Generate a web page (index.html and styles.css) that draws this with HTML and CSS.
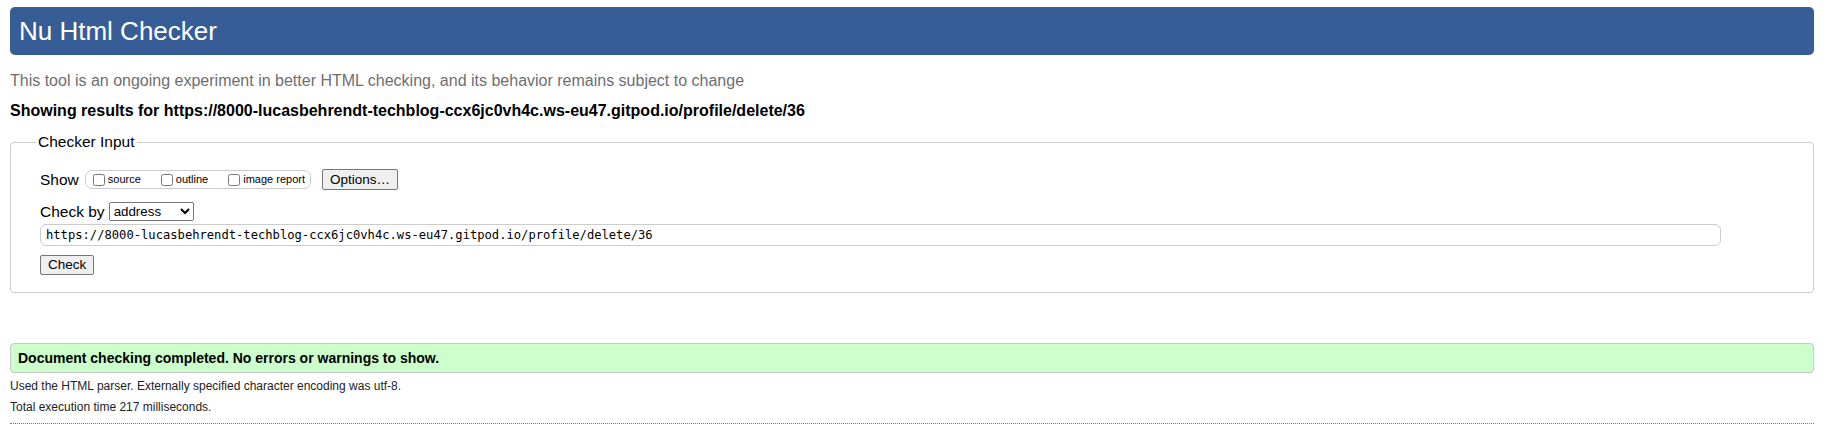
FILE: index.html
```html
<!DOCTYPE html>
<html lang="en">
<head>
<meta charset="utf-8">
<title>Showing results for https://8000-lucasbehrendt-techblog-ccx6jc0vh4c.ws-eu47.gitpod.io/profile/delete/36 - Nu Html Checker</title>
<link rel="stylesheet" href="styles.css">
</head>
<body>
<h1 class="title">Nu Html Checker</h1>
<p class="tagline">This tool is an ongoing experiment in better HTML checking, and its behavior remains subject to change</p>
<p class="results-for">Showing results for https://8000-lucasbehrendt-techblog-ccx6jc0vh4c.ws-eu47.gitpod.io/profile/delete/36</p>
<form class="checker-form">
  <fieldset class="checker">
    <legend class="checker-legend">Checker Input</legend>
    <div class="row">
      <span class="row-label">Show</span>
      <span class="show-group">
        <label class="opt"><input type="checkbox" class="cb">source</label>
        <label class="opt"><input type="checkbox" class="cb">outline</label>
        <label class="opt"><input type="checkbox" class="cb">image report</label>
      </span>
      <button type="button" class="btn btn-options">Options…</button>
    </div>
    <div class="row row-check-by">
      <span class="row-label">Check by</span>
      <select class="doc-select">
        <option selected>address</option>
        <option>file upload</option>
        <option>text input</option>
      </select>
    </div>
    <input class="url" type="url" value="https://8000-lucasbehrendt-techblog-ccx6jc0vh4c.ws-eu47.gitpod.io/profile/delete/36">
    <div class="submit-row"><button type="button" class="btn">Check</button></div>
  </fieldset>
</form>
<p class="success">Document checking completed. No errors or warnings to show.</p>
<p class="details">Used the HTML parser. Externally specified character encoding was utf-8.</p>
<p class="details">Total execution time 217 milliseconds.</p>
<div class="rule"></div>
</body>
</html>
```

FILE: styles.css
```css
html {
  background: #fff;
}

body {
  margin: 0;
  padding: 7px 22px 0 10px;
  font-family: "Liberation Sans", Arial, sans-serif;
  color: #222;
}

.title {
  box-sizing: border-box;
  margin: 0;
  height: 48px;
  padding: 10px 9px 0;
  font-size: 26px;
  line-height: 29px;
  font-weight: normal;
  color: #fff;
  background: #365d95;
  border-radius: 5px;
}

.tagline {
  margin: 17px 0 0;
  font-size: 16px;
  line-height: 18.4px;
  color: #6e6e6e;
}

.results-for {
  margin: 12px 0 0;
  font-size: 16px;
  line-height: 18.4px;
  font-weight: bold;
  color: #000;
}

.checker-form {
  margin: 12px 0 0;
}

.checker {
  margin: 0;
  padding: 18px 0 17px 29px;
  border: 1px solid #ccc;
  border-radius: 4px;
  font-size: 15.5px;
  line-height: 18.4px;
  color: #000;
}

.checker-legend {
  padding: 0 2px;
  margin-left: -4px;
  font-size: 15.5px;
  line-height: 18.4px;
}

.row {
  display: flex;
  align-items: center;
  height: 21px;
}

.row-label {
  white-space: nowrap;
}

.show-group {
  display: inline-flex;
  align-items: center;
  box-sizing: border-box;
  height: 19px;
  margin-left: 6px;
  padding: 0 5px 0 3px;
  border: 1px solid #ccc;
  border-radius: 7px;
}

.opt {
  display: inline-flex;
  align-items: center;
  font-size: 11px;
  line-height: 13px;
}

.opt + .opt {
  margin-left: 16px;
}

.cb {
  width: 12px;
  height: 12px;
  margin: 0 3px 0 4px;
}

.btn {
  box-sizing: border-box;
  height: 20px;
  padding: 0 7px;
  font-family: "Liberation Sans", Arial, sans-serif;
  font-size: 13.5px;
  line-height: 16px;
  color: #000;
  background: #efefef;
  border: 1px solid #767676;
  border-radius: 2px;
}

.btn-options {
  margin-left: 11px;
  height: 21px;
}

.row-check-by {
  margin-top: 12px;
  height: 19px;
}

.doc-select {
  margin-left: 4px;
  height: 19px;
  width: 85px;
  font-family: "Liberation Sans", Arial, sans-serif;
  font-size: 13.33px;
  color: #000;
}

.url {
  display: block;
  box-sizing: border-box;
  width: 94.8%;
  height: 21.4px;
  margin: 3px 0 0;
  padding: 0 5px;
  font-family: "DejaVu Sans Mono", "Liberation Mono", monospace;
  font-size: 12.15px;
  color: #000;
  border: 1px solid #ccc;
  border-radius: 6px;
  background: #fff;
}

.submit-row {
  margin-top: 9px;
  height: 20px;
}

.success {
  margin: 50.5px 0 0;
  padding: 6px 7px;
  font-size: 14px;
  line-height: 16px;
  font-weight: bold;
  color: #000;
  background: #ccffcc;
  border: 1px solid #c8c8c8;
  border-radius: 4px;
}

.details {
  margin: 7px 0 0;
  font-size: 12px;
  line-height: 13.8px;
  color: #222;
}

.rule {
  margin-top: 8px;
  border-top: 1px dotted #777;
}
```
